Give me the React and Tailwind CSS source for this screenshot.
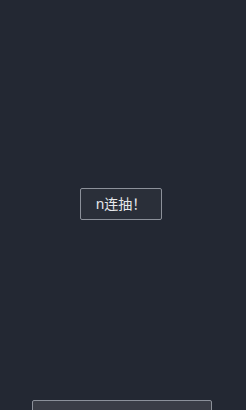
export default function App() {
  return (
    <div className="h-[410px] w-full overflow-hidden bg-[#232833] flex flex-col" style={{ fontFamily: '"Noto Sans", "Noto Sans CJK SC", sans-serif' }}>
      <div className="h-[400px] shrink-0 flex items-center justify-center pt-[8px] pr-[4px]">
        <button className="h-[32px] w-[82px] border border-[#8c919a] rounded-[2px] bg-[#2a2f39] text-[#e6e8ec] text-[14px] leading-none">
          n连抽！
        </button>
      </div>
      <div className="ml-[32px] w-[180px] h-[40px] shrink-0 border border-[#8c919a] rounded-[2px] bg-[#3a3d46]"></div>
    </div>
  );
}
